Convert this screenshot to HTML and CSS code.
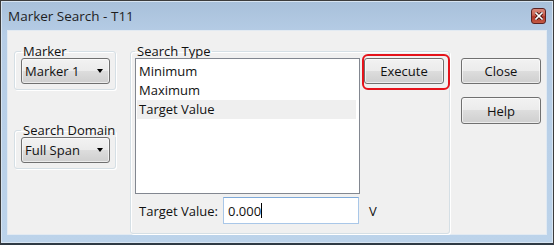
FILE: index.html
```html
<!DOCTYPE html>
<html>
<head>
    <meta charset="UTF-8">
    <title>Marker Search - T11</title>
    <link rel="stylesheet" href="styles.css">
</head>
<body>
    <div class="window">
        <div class="titlebar">
            <span class="title">Marker Search - T11</span>
            <div class="close-x">
                <svg width="8" height="8" viewBox="0 0 8 8">
                    <path d="M1 1 L7 7 M7 1 L1 7" stroke="#3a1010" stroke-width="3.2" stroke-linecap="square"/>
                    <path d="M1 1 L7 7 M7 1 L1 7" stroke="#ffffff" stroke-width="1.6" stroke-linecap="square"/>
                </svg>
            </div>
        </div>
        <div class="client">
            <div class="col-left">
                <fieldset class="group marker-group">
                    <legend>Marker</legend>
                    <div class="combo">Marker 1<span class="arrow"></span></div>
                </fieldset>
                <fieldset class="group domain-group">
                    <legend>Search Domain</legend>
                    <div class="combo">Full Span<span class="arrow"></span></div>
                </fieldset>
            </div>
            <fieldset class="group type-group">
                <legend>Search Type</legend>
                <div class="type-body">
                    <div class="type-left">
                        <ul class="listbox">
                            <li>Minimum</li>
                            <li>Maximum</li>
                            <li class="selected">Target Value</li>
                        </ul>
                        <div class="target-row">
                            <label class="target-label">Target Value:</label>
                            <div class="textbox">0.000<span class="caret"></span></div>
                            <span class="unit">V</span>
                        </div>
                    </div>
                    <div class="execute-wrap">
                        <button class="btn">Execute</button>
                        <span class="highlight"></span>
                    </div>
                </div>
            </fieldset>
            <div class="col-right">
                <button class="btn">Close</button>
                <button class="btn">Help</button>
            </div>
        </div>
    </div>
</body>
</html>
```

FILE: styles.css
```css
html, body {
    margin: 0;
    padding: 0;
    background-color: #ffffff;
}
body {
    font-family: "Open Sans", "Noto Sans", sans-serif;
    font-size: 12px;
    color: #111111;
    white-space: nowrap;
}
.window {
    width: 554px;
    height: 245px;
    box-sizing: border-box;
    border: 1px solid #3c3c3c;
    border-bottom: 2px solid #2f3a44;
    background: linear-gradient(to bottom, #a8c0da 0%, #b6cde6 14%, #bcd3ea 100%);
    box-shadow: inset 0 0 0 1px #d7e4f1;
    padding: 0 6px 8px 6px;
    display: flex;
    flex-direction: column;
}
.titlebar {
    height: 29px;
    display: flex;
    align-items: center;
    justify-content: space-between;
}
.title {
    font-size: 13.5px;
    color: #1e1e1e;
    margin-left: 1px;
    margin-top: 1px;
}
.close-x {
    width: 13px;
    height: 14px;
    margin-right: 1px;
    margin-top: 1px;
    border: 1px solid #5a2222;
    border-radius: 3px;
    background: linear-gradient(to bottom, #d8897c 0%, #c8604f 45%, #b0372a 55%, #c45a44 100%);
    display: flex;
    align-items: center;
    justify-content: center;
}
.client {
    flex: 1;
    background-color: #f0f0f0;
    border: 1px solid #e2eaf2;
    display: flex;
    align-items: flex-start;
    padding: 13px 5px 0 6px;
}
.col-left {
    width: 102px;
    flex-shrink: 0;
    display: flex;
    flex-direction: column;
    gap: 33px;
}
.group {
    margin: 0;
    border: 1px solid #d5dfe5;
    border-radius: 3px;
    box-shadow: inset 1px 1px 0 #ffffff, 1px 1px 0 #ffffff;
    min-width: 0;
}
.group legend {
    padding: 0 2px;
    line-height: 14px;
    font-size: 13px;
}
.marker-group,
.domain-group {
    padding: 0 5px 5px 6px;
}
.combo {
    height: 26px;
    box-sizing: border-box;
    border: 1px solid #707070;
    border-radius: 3px;
    background: linear-gradient(to bottom, #f2f2f2 0%, #ebebeb 49%, #dddddd 50%, #cfcfcf 100%);
    box-shadow: inset 0 0 0 1px rgba(255,255,255,0.6);
    font-size: 13px;
    display: flex;
    align-items: center;
    justify-content: space-between;
    padding: 0 6px 0 3px;
}
.arrow {
    width: 0;
    height: 0;
    border-left: 3px solid transparent;
    border-right: 3px solid transparent;
    border-top: 4px solid #000000;
}
.type-group {
    margin-left: 14px;
    width: 320px;
    flex-shrink: 0;
    box-sizing: border-box;
    padding: 0 5px 9px 4px;
}
.type-body {
    display: flex;
    gap: 4px;
}
.type-left {
    width: 225px;
    flex-shrink: 0;
    display: flex;
    flex-direction: column;
    gap: 3px;
}
.listbox {
    list-style: none;
    margin: 0;
    height: 136px;
    box-sizing: border-box;
    border: 1px solid #828790;
    background-color: #ffffff;
    padding: 3px 3px 0 1px;
}
.listbox li {
    height: 19px;
    line-height: 19px;
    padding-left: 2px;
    font-size: 13px;
}
.listbox li.selected {
    background-color: #efefef;
}
.target-row {
    display: flex;
    align-items: center;
}
.target-label {
    font-size: 13px;
    margin-left: 4px;
    width: 84px;
    flex-shrink: 0;
}
.textbox {
    width: 136px;
    height: 27px;
    flex-shrink: 0;
    box-sizing: border-box;
    border: 1px solid #a9c7e8;
    border-top-color: #7ea9d8;
    background-color: #ffffff;
    font-size: 13px;
    display: flex;
    align-items: center;
    padding-left: 4px;
}
.caret {
    width: 1px;
    height: 15px;
    background-color: #000000;
}
.unit {
    font-size: 13px;
    margin-left: 10px;
    flex-shrink: 0;
}
.execute-wrap {
    position: relative;
    width: 80px;
    flex-shrink: 0;
}
.btn {
    width: 80px;
    height: 26px;
    box-sizing: border-box;
    border: 1px solid #707070;
    border-radius: 3px;
    background: linear-gradient(to bottom, #f2f2f2 0%, #ebebeb 49%, #dddddd 50%, #cfcfcf 100%);
    box-shadow: inset 0 0 0 1px rgba(255,255,255,0.6);
    font-family: "Open Sans", "Noto Sans", sans-serif;
    font-size: 13px;
    color: #111111;
    padding: 0;
}
.highlight {
    position: absolute;
    left: -2px;
    top: -4px;
    width: 88px;
    height: 36px;
    box-sizing: border-box;
    border: 2px solid #e5131b;
    border-radius: 6px;
}
.col-right {
    margin-left: 11px;
    padding-top: 14px;
    display: flex;
    flex-direction: column;
    gap: 13px;
}
.col-right .btn + .btn {
    height: 27px;
}
```
